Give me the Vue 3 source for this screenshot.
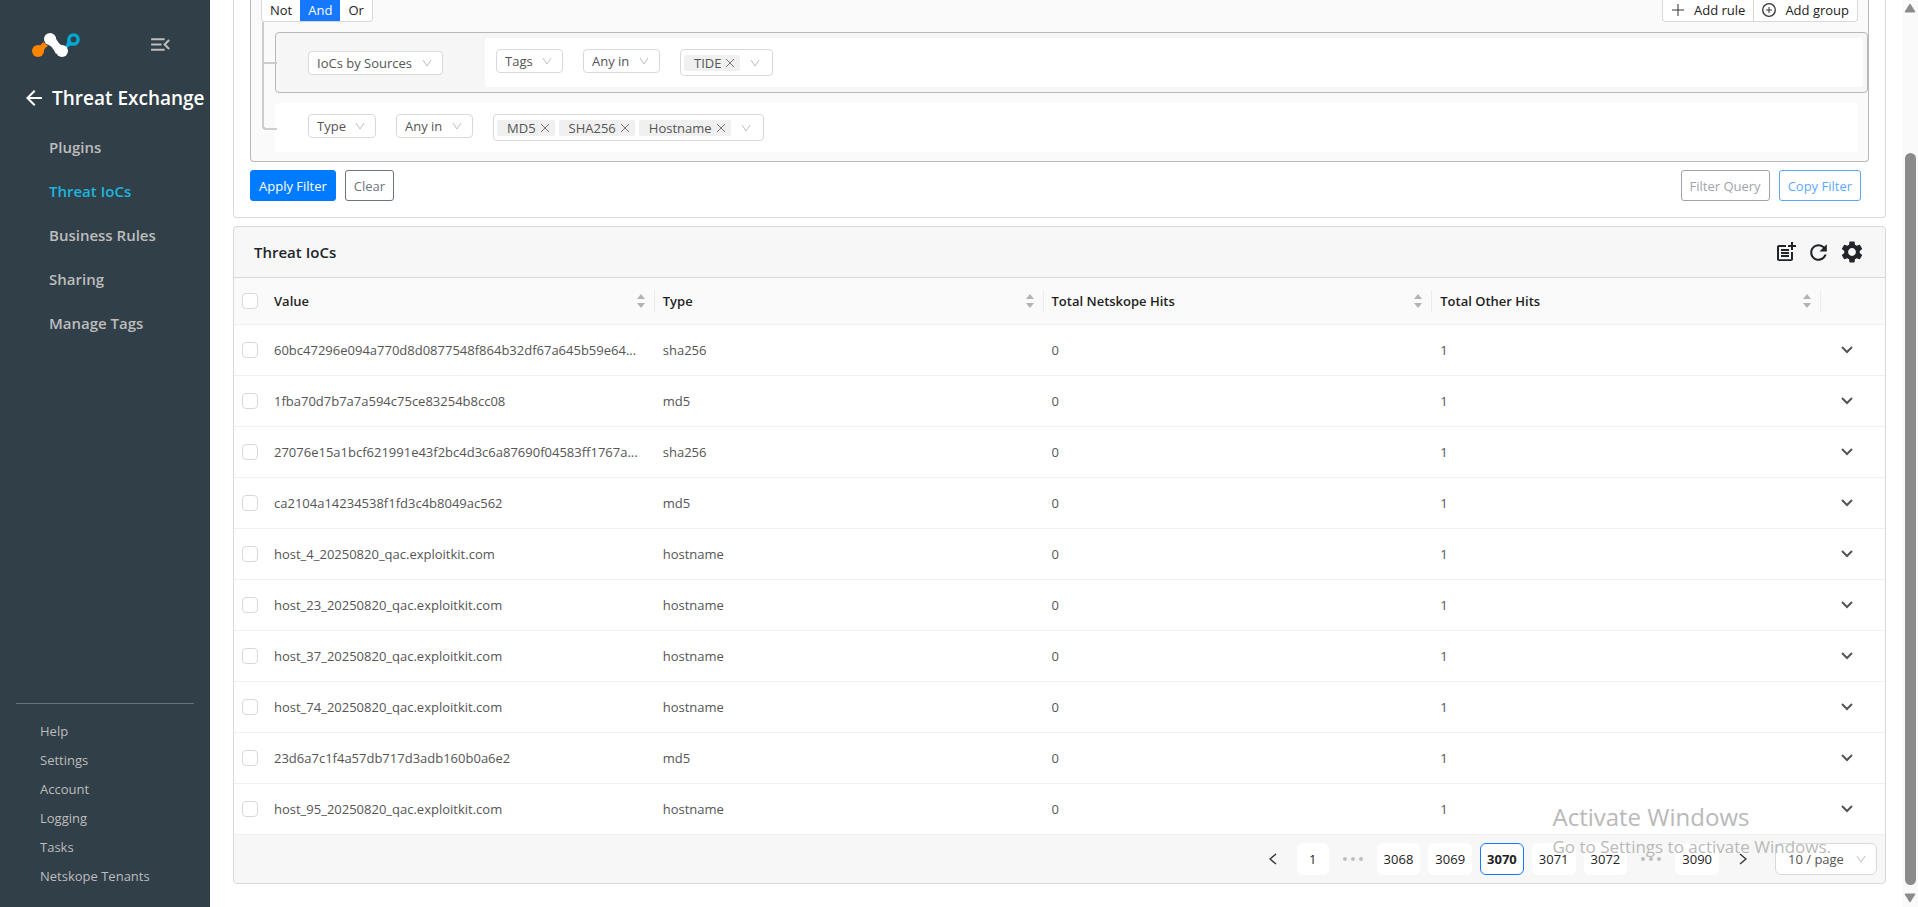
<script setup>
import { ref } from 'vue'

const navItems = ['Plugins', 'Threat IoCs', 'Business Rules', 'Sharing', 'Manage Tags']
const activeNav = 'Threat IoCs'
const footerItems = ['Help', 'Settings', 'Account', 'Logging', 'Tasks', 'Netskope Tenants']
const columns = ['Value', 'Type', 'Total Netskope Hits', 'Total Other Hits']
const rows = [
  { value: '60bc47296e094a770d8d0877548f864b32df67a645b59e64...', type: 'sha256' },
  { value: '1fba70d7b7a7a594c75ce83254b8cc08', type: 'md5' },
  { value: '27076e15a1bcf621991e43f2bc4d3c6a87690f04583ff1767a...', type: 'sha256' },
  { value: 'ca2104a14234538f1fd3c4b8049ac562', type: 'md5' },
  { value: 'host_4_20250820_qac.exploitkit.com', type: 'hostname' },
  { value: 'host_23_20250820_qac.exploitkit.com', type: 'hostname' },
  { value: 'host_37_20250820_qac.exploitkit.com', type: 'hostname' },
  { value: 'host_74_20250820_qac.exploitkit.com', type: 'hostname' },
  { value: '23d6a7c1f4a57db717d3adb160b0a6e2', type: 'md5' },
  { value: 'host_95_20250820_qac.exploitkit.com', type: 'hostname' },
]
const pages = ['1', '•••', '3068', '3069', '3070', '3071', '3072', '•••', '3090']
const currentPage = ref('3070')
const conjunction = ref('And')
</script>

<template>
  <div class="app">
    <aside class="sidebar">
      <div class="brand">
        <svg class="logo" viewBox="0 0 48 24" width="48" height="24" role="img" aria-label="Netskope">
          <path d="M4 14 Q9 13 11 9 L16 13 Q12 15 11 20 Z" fill="#ff8400" />
          <circle cx="6" cy="18" r="6" fill="#ff8400" />
          <path d="M33 15 Q35 10 36 5 L43 11 Q38 12 34 16 Z" fill="#00a8d4" />
          <circle cx="41.500" cy="6.500" r="6.300" fill="#00a8d4" />
          <circle cx="41.500" cy="6.500" r="2.900" fill="#313f48" />
          <path d="M13 10 Q20 12 24 21 L35 14 Q26 13 23 3 Z" fill="#fff" />
          <circle cx="18" cy="6" r="6" fill="#fff" />
          <circle cx="30" cy="18" r="6" fill="#fff" />
        </svg>
        <button class="plain" aria-label="Collapse menu">
          <svg viewBox="0 0 24 24" width="25" height="25" fill="#bdbdbd">
            <path d="M3 18h13v-2H3v2zm0-5h10v-2H3v2zm0-7v2h13V6H3zm18 9.590L17.420 12 21 8.410 19.590 7l-5 5 5 5L21 15.590z" />
          </svg>
        </button>
      </div>
      <div class="section">
        <button class="plain" aria-label="Back">
          <svg viewBox="0 0 24 24" width="24" height="24" fill="#fff">
            <path d="M20 11H7.830l5.590-5.590L12 4l-8 8 8 8 1.410-1.410L7.830 13H20v-2z" />
          </svg>
        </button>
        <h1>Threat Exchange</h1>
      </div>
      <nav class="nav" aria-label="Threat Exchange">
        <a v-for="item in navItems" :key="item" href="#" :class="{ active: item === activeNav }">{{ item }}</a>
      </nav>
      <nav class="sub-nav" aria-label="General">
        <a v-for="item in footerItems" :key="item" href="#">{{ item }}</a>
      </nav>
    </aside>

    <main class="main">
      <section class="filter-card" aria-label="Filters">
        <div class="query">
          <div class="query-head">
            <div class="btn-group">
              <button v-for="c in ['Not', 'And', 'Or']" :key="c" :class="{ on: conjunction === c }" @click="conjunction = c">{{ c }}</button>
            </div>
            <div class="btn-group wide">
              <button>
                <svg viewBox="0 0 14 14" width="14" height="14" fill="none" stroke="#333"><path d="M7 1v12M1 7h12" /></svg>
                Add rule
              </button>
              <button>
                <svg viewBox="0 0 14 14" width="14" height="14" fill="none" stroke="#333"><circle cx="7" cy="7" r="6.300" stroke-width="1.300" /><path d="M7 4v6M4 7h6" /></svg>
                Add group
              </button>
            </div>
          </div>

          <div class="tree">
            <div class="branch">
              <div class="group">
                <div class="group-field">
                  <span class="select">
                    <select aria-label="Group field"><option>IoCs by Sources</option></select>
                    <svg viewBox="0 0 10 8" width="10" height="8"><path d="M1 1l4 6 4-6" /></svg>
                  </span>
                </div>
                <div class="rule nested">
                  <span class="select">
                    <select aria-label="Field"><option>Tags</option></select>
                    <svg viewBox="0 0 10 8" width="10" height="8"><path d="M1 1l4 6 4-6" /></svg>
                  </span>
                  <span class="select">
                    <select aria-label="Operator"><option>Any in</option></select>
                    <svg viewBox="0 0 10 8" width="10" height="8"><path d="M1 1l4 6 4-6" /></svg>
                  </span>
                  <div class="tags">
                    <span class="tag">TIDE<button class="plain" aria-label="Remove TIDE"><svg viewBox="0 0 8 8" width="8" height="8"><path d="M0 0l8 8M8 0l-8 8" /></svg></button></span>
                    <svg class="arrow" viewBox="0 0 10 8" width="10" height="8"><path d="M1 1l4 6 4-6" /></svg>
                  </div>
                </div>
              </div>
            </div>
            <div class="branch last">
              <div class="rule">
                <span class="select">
                  <select aria-label="Field"><option>Type</option></select>
                  <svg viewBox="0 0 10 8" width="10" height="8"><path d="M1 1l4 6 4-6" /></svg>
                </span>
                <span class="select">
                  <select aria-label="Operator"><option>Any in</option></select>
                  <svg viewBox="0 0 10 8" width="10" height="8"><path d="M1 1l4 6 4-6" /></svg>
                </span>
                <div class="tags">
                  <span v-for="t in ['MD5', 'SHA256', 'Hostname']" :key="t" class="tag">{{ t }}<button class="plain" :aria-label="'Remove ' + t"><svg viewBox="0 0 8 8" width="8" height="8"><path d="M0 0l8 8M8 0l-8 8" /></svg></button></span>
                  <svg class="arrow" viewBox="0 0 10 8" width="10" height="8"><path d="M1 1l4 6 4-6" /></svg>
                </div>
              </div>
            </div>
          </div>
        </div>
        <div class="actions">
          <button class="btn primary">Apply Filter</button>
          <button class="btn secondary">Clear</button>
          <span class="spacer"></span>
          <button class="btn secondary" disabled>Filter Query</button>
          <button class="btn outline" disabled>Copy Filter</button>
        </div>
      </section>

      <section class="table-card">
        <header class="card-head">
          <h2>Threat IoCs</h2>
          <button class="plain" aria-label="Add">
            <svg viewBox="0 0 24 24" width="24" height="24" fill="#212529">
              <path d="M17 19.220H5V7h7V5H5c-1.100 0-2 .9-2 2v12c0 1.100.9 2 2 2h12c1.100 0 2-.9 2-2v-7h-2v7.220z" />
              <path d="M19 2h-2v3h-3v2h3v3h2V7h3V5h-3V2zM7 9h8v2H7zM7 12v2h8v-2zM7 15h8v2H7z" />
            </svg>
          </button>
          <button class="plain" aria-label="Refresh">
            <svg viewBox="0 0 24 24" width="25" height="25" fill="#212529">
              <path d="M17.650 6.350C16.200 4.900 14.210 4 12 4c-4.420 0-7.990 3.580-7.990 8s3.570 8 7.990 8c3.730 0 6.840-2.550 7.730-6h-2.080c-.82 2.330-3.040 4-5.650 4-3.310 0-6-2.690-6-6s2.690-6 6-6c1.660 0 3.140.69 4.220 1.780L13 11h7V4l-2.350 2.350z" />
            </svg>
          </button>
          <button class="plain" aria-label="Table settings">
            <svg viewBox="0 0 24 24" width="26" height="26" fill="#212529">
              <path d="M19.140 12.940c.04-.3.060-.61.060-.94 0-.32-.02-.64-.07-.94l2.030-1.580c.18-.14.23-.41.12-.61l-1.920-3.320c-.12-.22-.37-.29-.59-.22l-2.390.96c-.5-.38-1.030-.7-1.620-.94l-.36-2.540c-.04-.24-.24-.41-.48-.41h-3.840c-.24 0-.43.17-.47.41l-.36 2.540c-.59.24-1.130.57-1.620.94l-2.390-.96c-.22-.08-.47 0-.59.22L2.740 8.870c-.12.21-.08.47.12.61l2.030 1.580c-.05.3-.09.63-.09.94s.02.64.07.94l-2.030 1.580c-.18.14-.23.41-.12.61l1.920 3.320c.12.22.37.29.59.22l2.390-.96c.5.38 1.030.7 1.620.94l.36 2.540c.05.24.24.41.48.41h3.840c.24 0 .44-.17.47-.41l.36-2.540c.59-.24 1.130-.56 1.620-.94l2.390.96c.22.08.47 0 .59-.22l1.920-3.320c.12-.22.07-.47-.12-.61l-2.010-1.580zM12 15.600c-1.980 0-3.600-1.620-3.600-3.600s1.620-3.600 3.600-3.600 3.600 1.620 3.600 3.600-1.620 3.600-3.600 3.600z" />
            </svg>
          </button>
        </header>
        <table>
          <colgroup>
            <col class="c-check" />
            <col v-for="c in columns" :key="c" />
            <col class="c-expand" />
          </colgroup>
          <thead>
            <tr>
              <th class="check"><input type="checkbox" aria-label="Select all" /></th>
              <th v-for="c in columns" :key="c">
                <div class="th">
                  <span>{{ c }}</span>
                  <button class="plain sorter" :aria-label="'Sort by ' + c">
                    <svg viewBox="0 0 8 16" width="8" height="16" fill="#b3b3b3"><path d="M0 6L4 1l4 5zM0 10h8l-4 5z" /></svg>
                  </button>
                </div>
              </th>
              <th></th>
            </tr>
          </thead>
          <tbody>
            <tr v-for="r in rows" :key="r.value">
              <td class="check"><input type="checkbox" :aria-label="'Select ' + r.value" /></td>
              <td>{{ r.value }}</td>
              <td>{{ r.type }}</td>
              <td>0</td>
              <td>1</td>
              <td class="expand">
                <button class="plain" aria-label="Expand row">
                  <svg viewBox="0 0 12 8" width="12" height="8" fill="none" stroke="#555" stroke-width="2"><path d="M1 1l5 5 5-5" /></svg>
                </button>
              </td>
            </tr>
          </tbody>
        </table>
        <nav class="pager" aria-label="Pagination">
          <button class="page bare" aria-label="Previous page">
            <svg viewBox="0 0 8 12" width="8" height="12"><path d="M7 1L1 6l6 5" /></svg>
          </button>
          <template v-for="(p, i) in pages" :key="i">
            <span v-if="p === '•••'" class="dots"><i></i><i></i><i></i></span>
            <button v-else class="page" :class="{ current: p === currentPage }" @click="currentPage = p">{{ p }}</button>
          </template>
          <button class="page bare" aria-label="Next page">
            <svg viewBox="0 0 8 12" width="8" height="12"><path d="M1 1l6 5-6 5" /></svg>
          </button>
          <span class="select size">
            <select aria-label="Page size"><option>10 / page</option></select>
            <svg viewBox="0 0 10 8" width="10" height="8"><path d="M1 1l4 6 4-6" /></svg>
          </span>
        </nav>
        <div class="watermark">
          <p class="wm-title">Activate Windows</p>
          <p class="wm-text">Go to Settings to activate Windows.</p>
        </div>
      </section>
    </main>

    <div class="rail" aria-hidden="true">
      <svg viewBox="0 0 12 10" width="12" height="10"><path d="M6 1l5 8H1z" /></svg>
      <div class="track"><div class="thumb"></div></div>
      <svg viewBox="0 0 12 10" width="12" height="10"><path d="M6 9L1 1h10z" /></svg>
    </div>
  </div>
</template>

<style>
body {
  margin: 0;
  background: #fff;
}
</style>

<style scoped>
* {
  box-sizing: border-box;
}
.app {
  display: flex;
  height: 100vh;
  overflow: hidden;
  font-family: "Open Sans", "Noto Sans", sans-serif;
  font-size: 13px;
  line-height: 20px;
  color: #555;
}
button,
select {
  font: inherit;
  color: inherit;
}
button {
  margin: 0;
}
svg {
  display: block;
  flex: none;
}
a {
  text-decoration: none;
  color: inherit;
}
.plain {
  border: 0;
  padding: 0;
  background: none;
}

/* Sidebar */
.sidebar {
  display: flex;
  flex-direction: column;
  flex: none;
  width: 210px;
  padding-bottom: 16px;
  background: #313f48;
  color: #bdbdbd;
}
.brand {
  display: flex;
  align-items: center;
  justify-content: space-between;
  padding: 32px 37px 0 32px;
}
.section {
  display: flex;
  align-items: center;
  gap: 6px;
  padding: 29px 0 0 22px;
  color: #fff;
  white-space: nowrap;
}
h1 {
  margin: 0;
  font-size: 19px;
  line-height: 24px;
  font-weight: 600;
}
.nav {
  display: flex;
  flex-direction: column;
  padding-top: 15px;
  font-size: 15px;
  font-weight: 600;
  line-height: 44px;
}
.nav a {
  padding-left: 49px;
}
.nav .active {
  color: #1cb5dd;
}
.sub-nav {
  display: flex;
  flex-direction: column;
  margin: auto 16px 0;
  padding-top: 13px;
  border-top: 1px solid #66727a;
  line-height: 29px;
}
.sub-nav a {
  padding-left: 24px;
}

/* Main area */
.main {
  flex: 1;
  min-width: 0;
  padding: 0 16px 0 23px;
}
.filter-card {
  padding: 0 16px 16px;
  border: 1px solid #d9d9d9;
  border-top: 0;
  border-radius: 0 0 4px 4px;
}
.query {
  padding-bottom: 9px;
  border: 1px solid #b8b8b8;
  border-top: 0;
  border-radius: 0 0 4px 4px;
  background: #fafafa;
}
.query-head {
  display: flex;
  justify-content: space-between;
  padding: 0 10px;
}
.btn-group {
  display: flex;
  height: 22px;
  border: 1px solid #d9d9d9;
  border-top: 0;
  border-radius: 0 0 4px 4px;
  background: #fff;
  color: #222;
  overflow: hidden;
}
.btn-group button {
  display: flex;
  align-items: center;
  gap: 9px;
  padding: 0 8px 2px;
  border: 0;
  background: none;
}
.btn-group .on {
  background: #1677ff;
  color: #fff;
}
.wide button + button {
  border-left: 1px solid #d9d9d9;
}
.tree {
  padding: 10px 0 0 11px;
}
.branch {
  position: relative;
  padding-left: 13px;
}
.branch::before {
  content: "";
  position: absolute;
  left: 0;
  top: -10px;
  width: 13px;
  height: 40px;
  border: solid #ccc;
  border-width: 0 0 2px 2px;
}
.branch.last {
  margin-top: 10px;
  padding-right: 10px;
}
.branch.last::before {
  top: -42px;
  height: 67px;
  border-radius: 0 0 0 4px;
}
.group {
  display: flex;
  padding: 5px 4px;
  border: 1px solid #b8b8b8;
  border-radius: 4px;
  background: #f6f6f6;
}
.group-field {
  display: flex;
  align-items: center;
  width: 205px;
  padding-left: 28px;
}
.rule {
  display: flex;
  flex: 1;
  align-items: flex-start;
  gap: 20px;
  padding: 11px 33px;
  border-radius: 4px;
  background: #fff;
}
.nested {
  padding: 11px;
}
.select {
  display: inline-flex;
  position: relative;
  align-items: center;
}
.select select {
  appearance: none;
  height: 24px;
  padding: 0 29px 0 8px;
  border: 1px solid #d9d9d9;
  border-radius: 4px;
  background: #fff;
}
.select svg {
  position: absolute;
  right: 11px;
  pointer-events: none;
}
.select path,
.arrow path {
  fill: none;
  stroke: #bfbfbf;
}
.tags {
  display: flex;
  align-items: center;
  gap: 4px;
  height: 27px;
  padding: 0 12px 0 3px;
  border: 1px solid #d9d9d9;
  border-radius: 4px;
  background: #fff;
}
.tag {
  display: flex;
  align-items: center;
  gap: 5px;
  padding: 0 6px 0 10px;
  line-height: 16px;
  border-radius: 2px;
  background: #f0f0f0;
}
.tag path {
  stroke: #777;
}
.arrow {
  margin-left: 6px;
}
.actions {
  display: flex;
  gap: 9px;
  padding: 8px 8px 0 0;
}
.spacer {
  flex: 1;
}
.btn {
  height: 31px;
  padding: 0 8px;
  border: 1px solid;
  border-radius: 3px;
  background: #fff;
}
.primary {
  border-color: #007bff;
  background: #007bff;
  color: #fff;
}
.secondary {
  color: #6c757d;
}
.outline {
  color: #007bff;
}
.btn:disabled {
  opacity: 0.65;
}

/* Table */
.table-card {
  position: relative;
  margin-top: 8px;
  border: 1px solid #d9d9d9;
  border-radius: 4px;
  background: #f7f7f7;
}
.card-head {
  display: flex;
  align-items: center;
  gap: 8px;
  height: 51px;
  padding: 0 20px;
  border-bottom: 1px solid #d9d9d9;
}
h2 {
  flex: 1;
  margin: 0;
  font-size: 15px;
  font-weight: 600;
  color: #212529;
}
table {
  width: 100%;
  table-layout: fixed;
  border-collapse: separate;
  border-spacing: 0;
  background: #fff;
}
.c-check {
  width: 32px;
}
.c-expand {
  width: 64px;
}
thead {
  background: #fafafa;
}
th,
td {
  padding: 0 8px;
  border-bottom: 1px solid #f0f0f0;
  text-align: left;
  white-space: nowrap;
}
th {
  position: relative;
  height: 47px;
  font-weight: 600;
  color: #1f1f1f;
}
th:not(.check):not(:last-child)::after {
  content: "";
  position: absolute;
  right: 0;
  top: 12px;
  width: 1px;
  height: 22px;
  background: #ececec;
}
.th {
  display: flex;
  align-items: center;
  justify-content: space-between;
}
.sorter {
  margin-right: 2px;
}
td {
  height: 51px;
}
input {
  display: block;
  appearance: none;
  width: 16px;
  height: 16px;
  margin: 0;
  border: 1px solid #d9d9d9;
  border-radius: 4px;
  background: #fff;
}
.expand {
  padding-right: 20px;
}
.expand button {
  display: block;
  margin: 0 auto;
  padding: 2px;
}

/* Pagination */
.pager {
  display: flex;
  align-items: center;
  justify-content: flex-end;
  gap: 8px;
  padding: 8px;
}
.page {
  min-width: 32px;
  height: 32px;
  padding: 0 6px;
  border: 1px solid transparent;
  border-radius: 6px;
  background: #fff;
  color: #222;
}
.current {
  border-color: #1677ff;
  font-weight: 700;
}
.bare {
  display: flex;
  align-items: center;
  justify-content: center;
  background: none;
}
.bare path {
  fill: none;
  stroke: #333;
  stroke-width: 1.400;
}
.dots {
  display: flex;
  justify-content: center;
  gap: 4px;
  width: 32px;
}
.dots i {
  width: 4px;
  height: 4px;
  border-radius: 2px;
  background: #bfbfbf;
}
.size {
  margin-left: 8px;
}
.size select {
  height: 32px;
  padding: 0 32px 0 12px;
  border-radius: 6px;
}
.watermark {
  position: absolute;
  right: 54px;
  bottom: 22px;
  color: #b9b9b9;
  pointer-events: none;
}
.watermark p {
  margin: 0;
}
.wm-title {
  font-size: 24px;
  line-height: 32px;
}
.wm-text {
  font-size: 17px;
  line-height: 28px;
}

/* Scroll rail */
.rail {
  display: flex;
  flex-direction: column;
  align-items: center;
  flex: none;
  width: 16px;
  padding: 3px 0 4px;
  background: #fafafa;
}
.rail path {
  fill: #8b8b8b;
  stroke: #8b8b8b;
  stroke-linejoin: round;
}
.track {
  display: flex;
  flex-direction: column;
  justify-content: flex-end;
  flex: 1;
  padding-bottom: 8px;
}
.thumb {
  width: 11px;
  height: 84%;
  border-radius: 6px;
  background: #8b8b8b;
}
</style>
